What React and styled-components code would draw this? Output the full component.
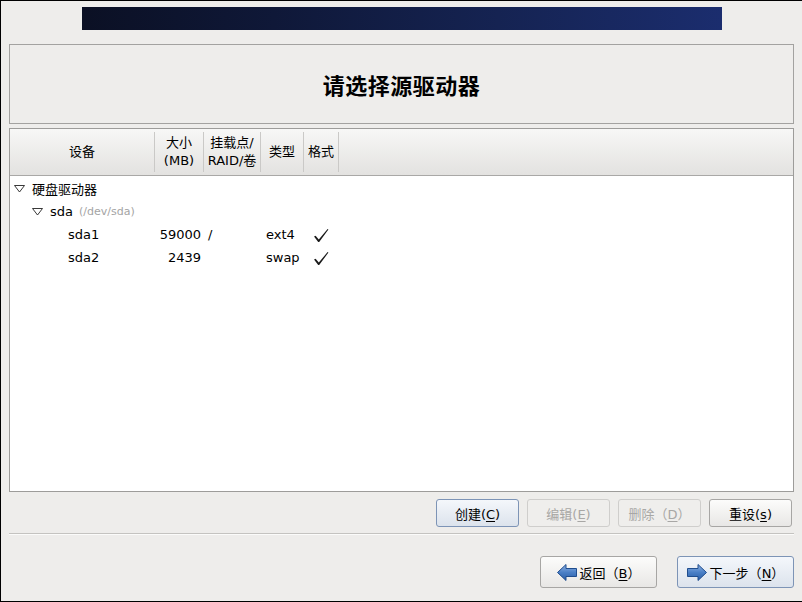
import React from "react";
import styled, { createGlobalStyle } from "styled-components";

const GlobalStyle = createGlobalStyle`
  html, body {
    margin: 0;
    padding: 0;
    background: #eeedeb;
  }
  body {
    font-family: "DejaVu Sans", "Noto Sans CJK SC", sans-serif;
    font-size: 13px;
    color: #000;
  }
`;

const COLS = "145px 49px 57px 43px 35px 1fr";

const Window = styled.div`
  width: 802px;
  height: 602px;
  box-sizing: border-box;
  border: 1px solid #000;
  border-right: 0;
  background: #eeedeb;
  display: flex;
  flex-direction: column;
  padding: 0 8px;
`;

const Banner = styled.div`
  align-self: center;
  width: 640px;
  height: 23px;
  margin-top: 6px;
  background: linear-gradient(90deg, #0b1024 0%, #0f1838 30%, #152352 65%, #1b2d6e 100%);
`;

const TitleBox = styled.div`
  margin-top: 14px;
  height: 80px;
  box-sizing: border-box;
  border: 1px solid #a3a2a0;
  display: flex;
  align-items: center;
  justify-content: center;
`;

const Title = styled.h1`
  margin: 0;
  font-family: "Noto Sans CJK SC", sans-serif;
  font-size: 22px;
  font-weight: 700;
  letter-spacing: 0.5px;
`;

const TablePanel = styled.div`
  margin-top: 4px;
  height: 364px;
  box-sizing: border-box;
  border: 1px solid #9d9c9a;
  background: #fff;
  display: flex;
  flex-direction: column;
`;

const Header = styled.div`
  display: grid;
  grid-template-columns: ${COLS};
  height: 47px;
  box-sizing: border-box;
  border-bottom: 1px solid #a9a8a6;
  background: linear-gradient(#f7f7f6, #e3e2e0);
`;

const HeadCell = styled.div`
  display: flex;
  align-items: center;
  justify-content: center;
  text-align: center;
  line-height: 18px;
  margin: 3px 0;
  border-right: 1px solid #cac9c7;
  white-space: nowrap;
`;

const Body = styled.div`
  padding-top: 1px;
`;

const Row = styled.div`
  display: grid;
  grid-template-columns: ${COLS};
  height: 23px;
  align-items: center;
`;

const TreeCell = styled.div`
  display: flex;
  align-items: center;
  padding-left: ${(p) => 4 + p.depth * 18}px;
  white-space: nowrap;
`;

const Expander = styled.span`
  width: 18px;
  flex: none;
  display: flex;
  align-items: center;
`;

const Muted = styled.span`
  margin-left: 6px;
  font-size: 11px;
  color: #a4a4a4;
`;

const Cell = styled.div`
  text-align: ${(p) => p.align || "left"};
  padding: ${(p) => p.pad || "0"};
  white-space: nowrap;
`;

const ButtonRow = styled.div`
  margin-top: 7px;
  display: flex;
  justify-content: flex-end;
  gap: 8px;
  padding-right: 2px;
`;

const Button = styled.button`
  width: ${(p) => p.w}px;
  height: ${(p) => p.h}px;
  box-sizing: border-box;
  border-radius: 3px;
  font-family: "DejaVu Sans", "Noto Sans CJK SC", sans-serif;
  font-size: 13px;
  padding: 0;
  display: flex;
  align-items: center;
  justify-content: center;
  gap: 3px;
  color: ${(p) => (p.disabled ? "#a8a7a5" : "#000")};
  border: 1px solid
    ${(p) => (p.disabled ? "#cfcecc" : p.primary ? "#7d94b6" : "#a7a6a4")};
  background: ${(p) =>
    p.disabled
      ? "#efeeec"
      : p.primary
      ? "linear-gradient(#f4f7fb, #dce3ec)"
      : "linear-gradient(#fcfcfb, #e8e7e5)"};
`;

const Key = styled.u`
  text-underline-offset: 2px;
`;

const Separator = styled.div`
  margin-top: 6px;
  height: 0;
  border-top: 1px solid #c4c3c0;
  border-bottom: 1px solid #fbfbfa;
`;

const NavRow = styled.div`
  margin-top: 21px;
  display: flex;
  justify-content: flex-end;
  gap: 20px;
`;

const Triangle = () => (
  <svg width="11" height="8" viewBox="0 0 11 8">
    <polygon points="0.5,0.5 10.5,0.5 5.5,7" fill="none" stroke="#222" strokeWidth="0.9" />
  </svg>
);

const Check = () => (
  <svg width="16" height="15" viewBox="0 0 16 15">
    <path d="M1 8.5 L2.6 7.8 L5.8 11.6 L14.6 1 L15.4 1.6 L6.2 14 L5.2 14 Z" fill="#1a1a1a" />
  </svg>
);

const Arrow = ({ dir }) => (
  <svg width="20" height="17" viewBox="0 0 20 17">
    <defs>
      <linearGradient id={`ag-${dir}`} x1="0" y1="0" x2="0" y2="1">
        <stop offset="0" stopColor="#8db2e3" />
        <stop offset="0.5" stopColor="#4a7fc6" />
        <stop offset="1" stopColor="#2a5ea6" />
      </linearGradient>
    </defs>
    <g transform={dir === "right" ? "translate(20 0) scale(-1 1)" : undefined}>
      <path
        d="M0.5 8.5 L9 0.5 L9 4.5 L19.5 4.5 L19.5 12.5 L9 12.5 L9 16.5 Z"
        fill={`url(#ag-${dir})`}
        stroke="#1f4d8e"
        strokeWidth="1"
        strokeLinejoin="round"
      />
    </g>
  </svg>
);

const partitions = [
  { name: "sda1", size: "59000", mount: "/", type: "ext4" },
  { name: "sda2", size: "2439", mount: "", type: "swap" },
];

export default function App() {
  return (
    <>
      <GlobalStyle />
      <Window>
        <Banner />
        <TitleBox>
          <Title>请选择源驱动器</Title>
        </TitleBox>

        <TablePanel>
          <Header>
            <HeadCell>设备</HeadCell>
            <HeadCell>
              大小
              <br />
              (MB)
            </HeadCell>
            <HeadCell>
              挂载点/
              <br />
              RAID/卷
            </HeadCell>
            <HeadCell>类型</HeadCell>
            <HeadCell>格式</HeadCell>
            <div />
          </Header>
          <Body>
            <Row>
              <TreeCell depth={0}>
                <Expander>
                  <Triangle />
                </Expander>
                硬盘驱动器
              </TreeCell>
            </Row>
            <Row>
              <TreeCell depth={1}>
                <Expander>
                  <Triangle />
                </Expander>
                sda<Muted>(/dev/sda)</Muted>
              </TreeCell>
            </Row>
            {partitions.map((p) => (
              <Row key={p.name}>
                <TreeCell depth={2}>
                  <Expander />
                  {p.name}
                </TreeCell>
                <Cell align="right" pad="0 3px 0 0">
                  {p.size}
                </Cell>
                <Cell pad="0 0 0 4px">{p.mount}</Cell>
                <Cell pad="0 0 0 5px">{p.type}</Cell>
                <Cell pad="4px 0 0 9px">
                  <Check />
                </Cell>
                <div />
              </Row>
            ))}
          </Body>
        </TablePanel>

        <ButtonRow>
          <Button w={83} h={28} primary>
            <span>
              创建(<Key>C</Key>)
            </span>
          </Button>
          <Button w={83} h={28} disabled>
            <span>
              编辑(<Key>E</Key>)
            </span>
          </Button>
          <Button w={83} h={28} disabled>
            <span>
              删除（<Key>D</Key>）
            </span>
          </Button>
          <Button w={83} h={28}>
            <span>
              重设(<Key>s</Key>)
            </span>
          </Button>
        </ButtonRow>

        <Separator />

        <NavRow>
          <Button w={117} h={32}>
            <Arrow dir="left" />
            <span>
              返回（<Key>B</Key>）
            </span>
          </Button>
          <Button w={117} h={32} primary>
            <Arrow dir="right" />
            <span>
              下一步（<Key>N</Key>）
            </span>
          </Button>
        </NavRow>
      </Window>
    </>
  );
}
